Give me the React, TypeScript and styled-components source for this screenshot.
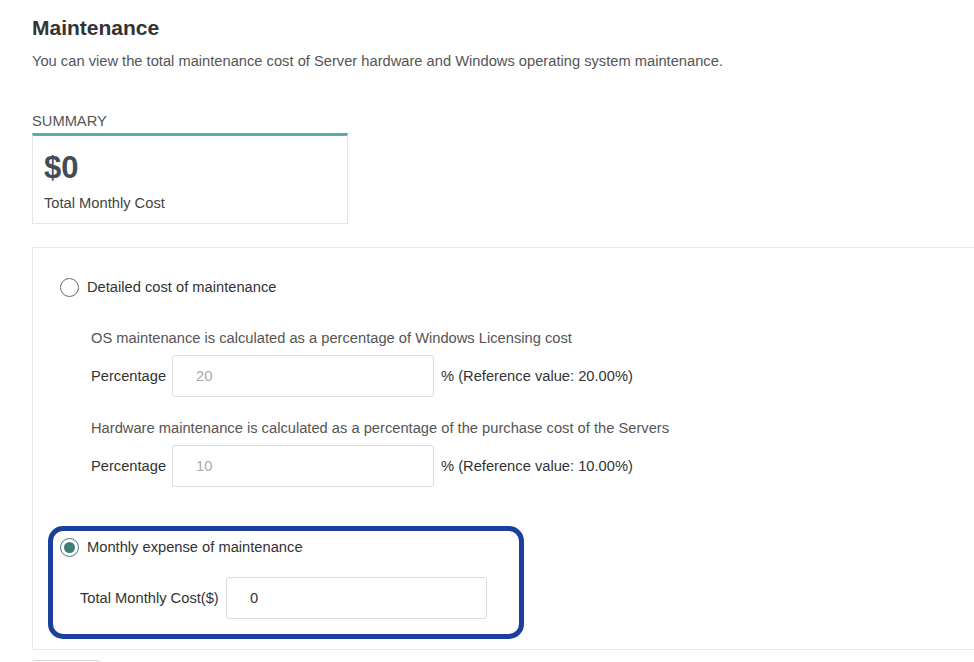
import React, { useState } from 'react'
import styled, { createGlobalStyle } from 'styled-components'

const GlobalStyle = createGlobalStyle`
  body {
    margin: 0;
    background: #fff;
    font-family: 'Liberation Sans', Arial, sans-serif;
    color: #333;
    overflow: hidden;
  }
`

const Page = styled.div`
  padding: 16px 0 0 32px;
`

const Title = styled.h1`
  margin: 0;
  font-size: 21px;
  line-height: 24px;
  font-weight: 700;
  color: #333;
`

const Description = styled.p`
  margin: 11px 0 0;
  font-size: 14.7px;
  line-height: 20px;
  color: #555;
`

const SectionLabel = styled.div`
  margin-top: 40px;
  font-size: 14.7px;
  line-height: 20px;
  color: #555;
  text-transform: uppercase;
`

const SummaryCard = styled.div`
  margin-top: 2px;
  width: 316px;
  box-sizing: border-box;
  border: 1px solid #e6e6e6;
  border-top: 3px solid #5aa9b3;
  padding: 14px 0 10px 11px;
`

const Amount = styled.div`
  font-size: 31px;
  line-height: 36px;
  font-weight: 700;
  color: #434c55;
`

const AmountCaption = styled.div`
  margin-top: 7px;
  font-size: 14.7px;
  line-height: 20px;
  color: #444;
`

const Panel = styled.div`
  margin-top: 23px;
  border: 1px solid #e8e8e8;
  border-right: none;
  padding: 29px 0 10px 27px;
`

const OptionRow = styled.label`
  display: flex;
  align-items: center;
  gap: 8px;
  font-size: 14.7px;
  line-height: 20px;
  color: #333;
  cursor: pointer;
`

const Radio = styled.span<{ $checked?: boolean }>`
  width: 19px;
  height: 19px;
  border-radius: 50%;
  box-sizing: border-box;
  border: 1.5px solid ${p => (p.$checked ? '#3f7d79' : '#6b6b6b')};
  display: flex;
  align-items: center;
  justify-content: center;
  flex: none;
  &::after {
    content: '';
    width: 11px;
    height: 11px;
    border-radius: 50%;
    background: #3f7d79;
    display: ${p => (p.$checked ? 'block' : 'none')};
  }
`

const Details = styled.div`
  margin-top: 31px;
  padding-left: 31px;
  display: flex;
  flex-direction: column;
`

const Hint = styled.div<{ $gap: number }>`
  margin-top: ${p => p.$gap}px;
  font-size: 14.7px;
  line-height: 20px;
  color: #555;
`

const FieldRow = styled.div`
  margin-top: 7px;
  display: flex;
  align-items: center;
  font-size: 14.7px;
  color: #333;
`

const FieldLabel = styled.span<{ $width: number }>`
  width: ${p => p.$width}px;
  flex: none;
`

const Input = styled.input<{ $muted?: boolean; $width: number }>`
  width: ${p => p.$width}px;
  height: 42px;
  box-sizing: border-box;
  border: 1px solid #dcdcdc;
  border-radius: 3px;
  padding: 0 0 0 23px;
  font-family: inherit;
  font-size: 14.7px;
  color: ${p => (p.$muted ? '#aaa' : '#333')};
  background: #fff;
  outline: none;
`

const Suffix = styled.span`
  margin-left: 7px;
`

const Highlight = styled.div`
  margin: 39px 0 0 -12px;
  width: 476px;
  box-sizing: border-box;
  border: 5px solid #1b3f9e;
  border-radius: 15px;
  padding: 6px 0 15px 7px;
`

const CostRow = styled.div`
  margin-top: 20px;
  padding-left: 20px;
  display: flex;
  align-items: center;
  font-size: 14.7px;
  color: #333;
`

const FooterButton = styled.div`
  margin-top: 10px;
  width: 66px;
  height: 32px;
  border: 1px solid #cfd8dc;
  border-radius: 3px;
  background: #fff;
`

export default function App() {
  const [mode, setMode] = useState<'detailed' | 'monthly'>('monthly')

  return (
    <>
      <GlobalStyle />
      <Page>
        <Title>Maintenance</Title>
        <Description>
          You can view the total maintenance cost of Server hardware and Windows operating system maintenance.
        </Description>

        <SectionLabel>Summary</SectionLabel>
        <SummaryCard>
          <Amount>$0</Amount>
          <AmountCaption>Total Monthly Cost</AmountCaption>
        </SummaryCard>

        <Panel>
          <OptionRow onClick={() => setMode('detailed')}>
            <Radio $checked={mode === 'detailed'} />
            Detailed cost of maintenance
          </OptionRow>

          <Details>
            <Hint $gap={0}>OS maintenance is calculated as a percentage of Windows Licensing cost</Hint>
            <FieldRow>
              <FieldLabel $width={81}>Percentage</FieldLabel>
              <Input $muted $width={262} defaultValue="20" readOnly />
              <Suffix>% (Reference value: 20.00%)</Suffix>
            </FieldRow>

            <Hint $gap={21}>
              Hardware maintenance is calculated as a percentage of the purchase cost of the Servers
            </Hint>
            <FieldRow>
              <FieldLabel $width={81}>Percentage</FieldLabel>
              <Input $muted $width={262} defaultValue="10" readOnly />
              <Suffix>% (Reference value: 10.00%)</Suffix>
            </FieldRow>
          </Details>

          <Highlight>
            <OptionRow onClick={() => setMode('monthly')}>
              <Radio $checked={mode === 'monthly'} />
              Monthly expense of maintenance
            </OptionRow>
            <CostRow>
              <FieldLabel $width={146}>Total Monthly Cost($)</FieldLabel>
              <Input $width={261} defaultValue="0" />
            </CostRow>
          </Highlight>
        </Panel>

        <FooterButton />
      </Page>
    </>
  )
}
